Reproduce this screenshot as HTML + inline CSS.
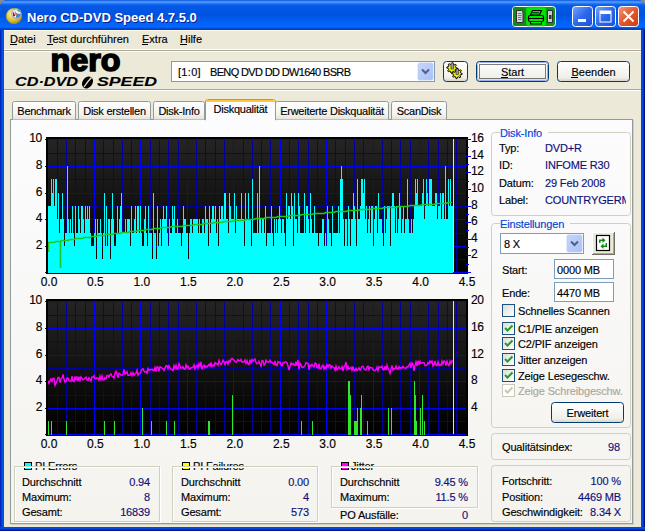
<!DOCTYPE html>
<html><head><meta charset="utf-8"><style>
html,body{margin:0;padding:0;width:645px;height:531px;overflow:hidden;background:#8a8a8a}
svg{display:block}
text{font-family:"Liberation Sans",sans-serif}
</style></head><body>
<svg width="645" height="531" viewBox="0 0 645 531" font-family="Liberation Sans, sans-serif">
<defs>
<linearGradient id="tb" x1="0" y1="0" x2="0" y2="30" gradientUnits="userSpaceOnUse">
<stop offset="0" stop-color="#0a4ee0"/>
<stop offset="0.04" stop-color="#3b8ef5"/>
<stop offset="0.08" stop-color="#4799ff"/>
<stop offset="0.13" stop-color="#1a6cf0"/>
<stop offset="0.2" stop-color="#0459e6"/>
<stop offset="0.5" stop-color="#0053e0"/>
<stop offset="0.75" stop-color="#0062f6"/>
<stop offset="0.9" stop-color="#0568ff"/>
<stop offset="0.95" stop-color="#0049d6"/>
<stop offset="1" stop-color="#003bc4"/>
</linearGradient>
<linearGradient id="plot" x1="0" y1="0" x2="0" y2="1">
<stop offset="0" stop-color="#242424"/>
<stop offset="1" stop-color="#000000"/>
</linearGradient>
<linearGradient id="pane" x1="0" y1="0" x2="0" y2="1">
<stop offset="0" stop-color="#fcfcfe"/>
<stop offset="1" stop-color="#f4f3ee"/>
</linearGradient>
<linearGradient id="tab" x1="0" y1="0" x2="0" y2="1">
<stop offset="0" stop-color="#fefefe"/>
<stop offset="0.7" stop-color="#f4f3ef"/>
<stop offset="1" stop-color="#e6e2d8"/>
</linearGradient>
<linearGradient id="btn" x1="0" y1="0" x2="0" y2="1">
<stop offset="0" stop-color="#ffffff"/>
<stop offset="0.8" stop-color="#f0f0ea"/>
<stop offset="1" stop-color="#d6d0c5"/>
</linearGradient>
<linearGradient id="ddb" x1="0" y1="0" x2="1" y2="1">
<stop offset="0" stop-color="#c6d6fb"/>
<stop offset="1" stop-color="#a8c0f4"/>
</linearGradient>
<linearGradient id="cb" x1="0" y1="0" x2="1" y2="1">
<stop offset="0" stop-color="#dcdcd7"/>
<stop offset="1" stop-color="#ffffff"/>
</linearGradient>
<linearGradient id="capbtn" x1="0" y1="0" x2="1" y2="1">
<stop offset="0" stop-color="#7aa6fb"/>
<stop offset="0.5" stop-color="#2a68ec"/>
<stop offset="1" stop-color="#1c52d8"/>
</linearGradient>
<linearGradient id="closebtn" x1="0" y1="0" x2="1" y2="1">
<stop offset="0" stop-color="#f39a7c"/>
<stop offset="0.5" stop-color="#e2562f"/>
<stop offset="1" stop-color="#c83c18"/>
</linearGradient>
<radialGradient id="disc" cx="0.4" cy="0.35" r="0.7">
<stop offset="0" stop-color="#fff6b0"/>
<stop offset="0.6" stop-color="#e2c23a"/>
<stop offset="1" stop-color="#a88a10"/>
</radialGradient>
</defs>
<rect x="0" y="0" width="645" height="531" fill="#8a8a8a" />
<path d="M0,8 Q0,0 8,0 L637,0 Q645,0 645,8 L645,531 L0,531 Z" fill="#0042d8"/>
<path d="M0,8 Q0,0 8,0 L637,0 Q645,0 645,8 L645,30 L0,30 Z" fill="url(#tb)"/>
<rect x="0" y="30" width="1" height="501" fill="#0026b8" />
<rect x="1" y="30" width="1" height="501" fill="#0040dc" />
<rect x="2" y="30" width="2" height="501" fill="#0050e8" />
<rect x="644" y="30" width="1" height="501" fill="#00138c" />
<rect x="643" y="30" width="1" height="501" fill="#0030c8" />
<rect x="641" y="30" width="2" height="501" fill="#0048e0" />
<rect x="0" y="530" width="645" height="1" fill="#00138c" />
<rect x="0" y="529" width="645" height="1" fill="#0030c8" />
<rect x="0" y="527" width="645" height="2" fill="#0048e0" />
<rect x="4" y="30" width="637" height="497" fill="#ece9d8" />
<rect x="4" y="30" width="637" height="1" fill="#fff9e8" />
<circle cx="14" cy="16" r="7.8" fill="url(#disc)" stroke="#b09a20" stroke-width="0.5"/>
<circle cx="16.3" cy="13.5" r="4.6" fill="#e8f2fa" stroke="#a8a8b4" stroke-width="1.1"/>
<path d="M16.3,13.5 L20.5,14 A4.2,4.2 0 0 1 16,17.8 Z" fill="#2a8ae8"/>
<path d="M14.5,10.5 L17.5,14.5 L15.5,15 Z" fill="#f06030"/><path d="M13,12.5 L14.5,15.5 L13.2,16" stroke="#c01010" stroke-width="1.3"/>
<path d="M17.5,10 L20,11.5" stroke="#30a040" stroke-width="1.4"/>
<text x="28" y="23" font-size="13" fill="#0a1e8c" text-anchor="start" font-weight="bold" >Nero CD-DVD Speed 4.7.5.0</text>
<text x="27" y="22" font-size="13" fill="#ffffff" text-anchor="start" font-weight="bold" >Nero CD-DVD Speed 4.7.5.0</text>
<rect x="512.5" y="6.5" width="43" height="20" rx="3" fill="#0a9a14" stroke="#ffffff" stroke-width="1"/>
<rect x="513" y="7" width="12" height="19" rx="2" fill="#0c8c18"/>
<path d="M516.5,10.5 h5 l1.5,1.5 v10.5 h-6.5 z" fill="#d8d8d8" stroke="#303030" stroke-width="1"/>
<path d="M518,13.5 h3.5 M518,15.5 h3.5 M518,17.5 h3.5 M518,19.5 h3.5" stroke="#606060" stroke-width="0.8"/>
<path d="M547.5,10.5 h5 v12 h-5 z" fill="#c8c8c8" stroke="#303030" stroke-width="1"/>
<rect x="549" y="15" width="2.5" height="4" fill="#303030"/>
<rect x="526" y="7" width="20" height="19" rx="2" fill="#00e600" stroke="#0a9a14" stroke-width="0.5"/>
<path d="M532.5,10.5 H541.5 L539.5,15 H530.5 Z" fill="#00e600" stroke="#000" stroke-width="1.2"/>
<path d="M532.5,12.8 H539" stroke="#000" stroke-width="0.9"/>
<rect x="528.5" y="15.5" width="15" height="6" rx="1.5" fill="#00e600" stroke="#000" stroke-width="1.2"/>
<path d="M529,18.5 H543" stroke="#000" stroke-width="1"/>
<rect x="530.5" y="21.5" width="11" height="2.5" fill="#00e600" stroke="#000" stroke-width="1"/>
<rect x="572.5" y="6.5" width="20" height="20" rx="3" fill="url(#capbtn)" stroke="#ffffff" stroke-width="1"/>
<rect x="595.5" y="6.5" width="20" height="20" rx="3" fill="url(#capbtn)" stroke="#ffffff" stroke-width="1"/>
<rect x="618.5" y="6.5" width="20" height="20" rx="3" fill="url(#closebtn)" stroke="#ffffff" stroke-width="1"/>
<rect x="578" y="19" width="8" height="3" fill="#fff"/>
<rect x="600" y="11" width="11" height="11" fill="none" stroke="#fff" stroke-width="1"/><rect x="600" y="11" width="11" height="3" fill="#fff"/>
<path d="M623.5,11.5 L633.5,21.5 M633.5,11.5 L623.5,21.5" stroke="#fff" stroke-width="2"/>
<text x="10" y="43" font-size="11" fill="#000" text-anchor="start" font-weight="normal" stroke="#000" stroke-width="0.15" >Datei</text>
<text x="47" y="43" font-size="11" fill="#000" text-anchor="start" font-weight="normal" stroke="#000" stroke-width="0.15" >Test durchführen</text>
<text x="142" y="43" font-size="11" fill="#000" text-anchor="start" font-weight="normal" stroke="#000" stroke-width="0.15" >Extra</text>
<text x="180" y="43" font-size="11" fill="#000" text-anchor="start" font-weight="normal" stroke="#000" stroke-width="0.15" >Hilfe</text>
<rect x="10" y="44" width="7" height="1" fill="#000" />
<rect x="47" y="44" width="6" height="1" fill="#000" />
<rect x="142" y="44" width="6" height="1" fill="#000" />
<rect x="180" y="44" width="7" height="1" fill="#000" />
<rect x="4" y="49" width="637" height="1" fill="#ffffff" />
<rect x="4" y="50" width="637" height="1" fill="#aca899" />
<rect x="4" y="51" width="637" height="1" fill="#ffffff" />
<text x="50.5" y="71" font-size="31" font-weight="bold" fill="#000" stroke="#000" stroke-width="1.6" textLength="70" lengthAdjust="spacingAndGlyphs" font-family="Liberation Sans, sans-serif">nero</text>
<text x="15" y="86" font-size="12" font-weight="bold" font-style="italic" fill="#000" stroke="#000" stroke-width="0.1" textLength="63" lengthAdjust="spacingAndGlyphs" font-family="Liberation Sans, sans-serif">CD·DVD</text>
<ellipse cx="87.5" cy="82.5" rx="5" ry="6.5" transform="rotate(35 87.5 82.5)" fill="#000"/>
<path d="M84,87 Q88,81 91.5,77.5" stroke="#ece9d8" stroke-width="1.3" fill="none"/>
<text x="97" y="86" font-size="12" font-weight="bold" font-style="italic" fill="#000" stroke="#000" stroke-width="0.1" textLength="60" lengthAdjust="spacingAndGlyphs" font-family="Liberation Sans, sans-serif">SPEED</text>
<rect x="4" y="89" width="637" height="1" fill="#aca899" />
<rect x="4" y="90" width="637" height="1" fill="#ffffff" />
<rect x="171.5" y="61.5" width="263" height="20" fill="#fff" stroke="#7f9db9" stroke-width="1"/>
<text x="178" y="76" font-size="11" fill="#000" text-anchor="start" font-weight="normal" stroke="#000" stroke-width="0.15" letter-spacing="0.3" >[1:0]</text>
<text x="210" y="76" font-size="11" fill="#000" text-anchor="start" font-weight="normal" stroke="#000" stroke-width="0.15" letter-spacing="-0.65" >BENQ DVD DD DW1640 BSRB</text>
<rect x="418" y="63" width="15" height="17" rx="1.5" fill="url(#ddb)" stroke="#b9cdf7" stroke-width="0.8"/>
<path d="M422,69.5 L425.5,73 L429,69.5" fill="none" stroke="#4d6185" stroke-width="2"/>
<rect x="443.5" y="61.5" width="24" height="20" rx="3" fill="url(#btn)" stroke="#003c74" stroke-width="1"/>
<path d="M462.20,73.50 L462.10,74.51 L460.33,74.88 L459.99,75.50 L460.68,77.18 L459.89,77.82 L458.38,76.83 L457.70,77.03 L457.00,78.70 L455.99,78.60 L455.62,76.83 L455.00,76.49 L453.32,77.18 L452.68,76.39 L453.67,74.88 L453.47,74.20 L451.80,73.50 L451.90,72.49 L453.67,72.12 L454.01,71.50 L453.32,69.82 L454.11,69.18 L455.62,70.17 L456.30,69.97 L457.00,68.30 L458.01,68.40 L458.38,70.17 L459.00,70.51 L460.68,69.82 L461.32,70.61 L460.33,72.12 L460.53,72.80Z" fill="#f5f000" stroke="#000" stroke-width="1"/>
<path d="M457.20,68.00 L457.10,69.01 L455.33,69.38 L454.99,70.00 L455.68,71.68 L454.89,72.32 L453.38,71.33 L452.70,71.53 L452.00,73.20 L450.99,73.10 L450.62,71.33 L450.00,70.99 L448.32,71.68 L447.68,70.89 L448.67,69.38 L448.47,68.70 L446.80,68.00 L446.90,66.99 L448.67,66.62 L449.01,66.00 L448.32,64.32 L449.11,63.68 L450.62,64.67 L451.30,64.47 L452.00,62.80 L453.01,62.90 L453.38,64.67 L454.00,65.01 L455.68,64.32 L456.32,65.11 L455.33,66.62 L455.53,67.30Z" fill="#f5f000" stroke="#000" stroke-width="1"/>
<rect x="451" y="63" width="2.4" height="6" fill="#9a9aa8" stroke="#222" stroke-width="0.6"/>
<rect x="456" y="69" width="2.4" height="5.5" fill="#9a9aa8" stroke="#222" stroke-width="0.6"/>
<rect x="476.5" y="61.5" width="72" height="20" rx="3" fill="url(#btn)" stroke="#003c74" stroke-width="1"/>
<rect x="477.5" y="62.5" width="70" height="18" rx="2" fill="none" stroke="#98b4f0" stroke-width="1"/>
<rect x="479.5" y="64.5" width="66" height="14" fill="none" stroke="#000" stroke-width="1" stroke-dasharray="1,1"/>
<text x="512.5" y="75.5" font-size="11" fill="#000" text-anchor="middle" font-weight="normal" stroke="#000" stroke-width="0.15" >Start</text>
<rect x="501" y="77" width="7" height="1" fill="#000" />
<rect x="557.5" y="61.5" width="72" height="20" rx="3" fill="url(#btn)" stroke="#003c74" stroke-width="1"/>
<text x="593.5" y="75.5" font-size="11" fill="#000" text-anchor="middle" font-weight="normal" stroke="#000" stroke-width="0.15" >Beenden</text>
<rect x="571" y="77" width="7" height="1" fill="#000" />
<rect x="10.5" y="119.5" width="622" height="404" fill="url(#pane)" stroke="#919b9c" stroke-width="1"/>
<rect x="11" y="524" width="623" height="1" fill="#d0cfc0" />
<rect x="633" y="120" width="1" height="405" fill="#d0cfc0" />
<path d="M12.5,119.5 V103.5 Q12.5,101.5 14.5,101.5 H73.5 Q75.5,101.5 75.5,103.5 V119.5" fill="url(#tab)" stroke="#919b9c" stroke-width="1"/>
<text x="44.0" y="115" font-size="11" fill="#000" text-anchor="middle" font-weight="normal" stroke="#000" stroke-width="0.15" letter-spacing="-0.25" >Benchmark</text>
<path d="M78.5,119.5 V103.5 Q78.5,101.5 80.5,101.5 H148.5 Q150.5,101.5 150.5,103.5 V119.5" fill="url(#tab)" stroke="#919b9c" stroke-width="1"/>
<text x="114.5" y="115" font-size="11" fill="#000" text-anchor="middle" font-weight="normal" stroke="#000" stroke-width="0.15" letter-spacing="-0.25" >Disk erstellen</text>
<path d="M153.5,119.5 V103.5 Q153.5,101.5 155.5,101.5 H202.5 Q204.5,101.5 204.5,103.5 V119.5" fill="url(#tab)" stroke="#919b9c" stroke-width="1"/>
<text x="179.0" y="115" font-size="11" fill="#000" text-anchor="middle" font-weight="normal" stroke="#000" stroke-width="0.15" letter-spacing="-0.25" >Disk-Info</text>
<path d="M275.5,119.5 V103.5 Q275.5,101.5 277.5,101.5 H386.5 Q388.5,101.5 388.5,103.5 V119.5" fill="url(#tab)" stroke="#919b9c" stroke-width="1"/>
<text x="332.0" y="115" font-size="11" fill="#000" text-anchor="middle" font-weight="normal" stroke="#000" stroke-width="0.15" letter-spacing="-0.25" >Erweiterte Diskqualität</text>
<path d="M391.5,119.5 V103.5 Q391.5,101.5 393.5,101.5 H444.5 Q446.5,101.5 446.5,103.5 V119.5" fill="url(#tab)" stroke="#919b9c" stroke-width="1"/>
<text x="419.0" y="115" font-size="11" fill="#000" text-anchor="middle" font-weight="normal" stroke="#000" stroke-width="0.15" letter-spacing="-0.25" >ScanDisk</text>
<path d="M205.5,120 V101.5 Q205.5,99.5 207.5,99.5 H273.5 Q275.5,99.5 275.5,101.5 V120 Z" fill="#fcfcfe" stroke="#919b9c" stroke-width="1"/>
<path d="M206,102 V101 Q206,99 208,99 H273 Q275,99 275,101 V102 Z" fill="#ffc73c"/>
<path d="M208,99.5 H273" stroke="#e68b2c" stroke-width="1"/>
<rect x="206" y="100" width="69" height="2" fill="#ffc73c" />
<rect x="206" y="119" width="69" height="2" fill="#fcfcfe" />
<text x="240.5" y="113" font-size="11" fill="#000" text-anchor="middle" font-weight="normal" stroke="#000" stroke-width="0.15" letter-spacing="-0.25" >Diskqualität</text>
<rect x="46" y="137" width="422" height="137" fill="#000" />
<rect x="48" y="139" width="418" height="133" fill="url(#plot)"/>
<rect x="57" y="139" width="1" height="134" fill="#00009c" />
<rect x="66" y="139" width="1" height="134" fill="#00009c" />
<rect x="75" y="139" width="1" height="134" fill="#00009c" />
<rect x="85" y="139" width="1" height="134" fill="#00009c" />
<rect x="94" y="139" width="1" height="134" fill="#0000ff" />
<rect x="103" y="139" width="1" height="134" fill="#00009c" />
<rect x="113" y="139" width="1" height="134" fill="#00009c" />
<rect x="122" y="139" width="1" height="134" fill="#00009c" />
<rect x="131" y="139" width="1" height="134" fill="#00009c" />
<rect x="140" y="139" width="1" height="134" fill="#0000ff" />
<rect x="150" y="139" width="1" height="134" fill="#00009c" />
<rect x="159" y="139" width="1" height="134" fill="#00009c" />
<rect x="168" y="139" width="1" height="134" fill="#00009c" />
<rect x="178" y="139" width="1" height="134" fill="#00009c" />
<rect x="187" y="139" width="1" height="134" fill="#0000ff" />
<rect x="196" y="139" width="1" height="134" fill="#00009c" />
<rect x="205" y="139" width="1" height="134" fill="#00009c" />
<rect x="215" y="139" width="1" height="134" fill="#00009c" />
<rect x="224" y="139" width="1" height="134" fill="#00009c" />
<rect x="233" y="139" width="1" height="134" fill="#0000ff" />
<rect x="243" y="139" width="1" height="134" fill="#00009c" />
<rect x="252" y="139" width="1" height="134" fill="#00009c" />
<rect x="261" y="139" width="1" height="134" fill="#00009c" />
<rect x="270" y="139" width="1" height="134" fill="#00009c" />
<rect x="280" y="139" width="1" height="134" fill="#0000ff" />
<rect x="289" y="139" width="1" height="134" fill="#00009c" />
<rect x="298" y="139" width="1" height="134" fill="#00009c" />
<rect x="308" y="139" width="1" height="134" fill="#00009c" />
<rect x="317" y="139" width="1" height="134" fill="#00009c" />
<rect x="326" y="139" width="1" height="134" fill="#0000ff" />
<rect x="335" y="139" width="1" height="134" fill="#00009c" />
<rect x="345" y="139" width="1" height="134" fill="#00009c" />
<rect x="354" y="139" width="1" height="134" fill="#00009c" />
<rect x="363" y="139" width="1" height="134" fill="#00009c" />
<rect x="373" y="139" width="1" height="134" fill="#0000ff" />
<rect x="382" y="139" width="1" height="134" fill="#00009c" />
<rect x="391" y="139" width="1" height="134" fill="#00009c" />
<rect x="400" y="139" width="1" height="134" fill="#00009c" />
<rect x="410" y="139" width="1" height="134" fill="#00009c" />
<rect x="419" y="139" width="1" height="134" fill="#0000ff" />
<rect x="428" y="139" width="1" height="134" fill="#00009c" />
<rect x="438" y="139" width="1" height="134" fill="#00009c" />
<rect x="447" y="139" width="1" height="134" fill="#00009c" />
<rect x="456" y="139" width="1" height="134" fill="#00009c" />
<rect x="48" y="139" width="418" height="1" fill="#0000ff" />
<rect x="45" y="139" width="3" height="1" fill="#0000ff" />
<rect x="48" y="153" width="418" height="1" fill="#00009c" />
<rect x="48" y="166" width="418" height="1" fill="#0000ff" />
<rect x="45" y="166" width="3" height="1" fill="#0000ff" />
<rect x="48" y="179" width="418" height="1" fill="#00009c" />
<rect x="48" y="193" width="418" height="1" fill="#0000ff" />
<rect x="45" y="193" width="3" height="1" fill="#0000ff" />
<rect x="48" y="206" width="418" height="1" fill="#00009c" />
<rect x="48" y="219" width="418" height="1" fill="#0000ff" />
<rect x="45" y="219" width="3" height="1" fill="#0000ff" />
<rect x="48" y="233" width="418" height="1" fill="#00009c" />
<rect x="48" y="246" width="418" height="1" fill="#0000ff" />
<rect x="45" y="246" width="3" height="1" fill="#0000ff" />
<rect x="48" y="259" width="418" height="1" fill="#00009c" />
<rect x="48" y="272" width="418" height="1" fill="#0000ff" />
<rect x="45" y="272" width="3" height="1" fill="#0000ff" />
<path fill="#00ffff" d="M48,273V206h1V273zM49,273V206h1V273zM50,273V206h1V273zM51,273V179h1V273zM52,273V193h1V273zM53,273V179h1V273zM54,273V206h1V273zM55,273V179h1V273zM56,273V179h1V273zM57,273V219h1V273zM58,273V193h1V273zM59,273V233h1V273zM60,273V219h1V273zM61,273V219h1V273zM62,273V193h1V273zM63,273V219h1V273zM64,273V246h1V273zM65,273V233h1V273zM66,273V233h1V273zM67,273V166h1V273zM68,273V219h1V273zM69,273V233h1V273zM70,273V219h1V273zM71,273V233h1V273zM72,273V206h1V273zM73,273V233h1V273zM74,273V246h1V273zM75,273V206h1V273zM76,273V233h1V273zM77,273V233h1V273zM78,273V206h1V273zM79,273V219h1V273zM80,273V233h1V273zM81,273V206h1V273zM82,273V206h1V273zM83,273V219h1V273zM84,273V233h1V273zM85,273V206h1V273zM86,273V219h1V273zM87,273V206h1V273zM88,273V219h1V273zM89,273V206h1V273zM90,273V233h1V273zM91,273V246h1V273zM92,273V246h1V273zM93,273V246h1V273zM94,273V233h1V273zM95,273V219h1V273zM96,273V259h1V273zM97,273V219h1V273zM98,273V233h1V273zM99,273V233h1V273zM100,273V219h1V273zM101,273V233h1V273zM102,273V259h1V273zM103,273V233h1V273zM104,273V193h1V273zM105,273V246h1V273zM106,273V206h1V273zM107,273V246h1V273zM108,273V219h1V273zM109,273V219h1V273zM110,273V259h1V273zM111,273V219h1V273zM112,273V193h1V273zM113,273V219h1V273zM114,273V246h1V273zM115,273V246h1V273zM116,273V233h1V273zM117,273V206h1V273zM118,273V233h1V273zM119,273V219h1V273zM120,273V206h1V273zM121,273V193h1V273zM122,273V233h1V273zM123,273V233h1V273zM124,273V233h1V273zM125,273V219h1V273zM126,273V233h1V273zM127,273V219h1V273zM128,273V219h1V273zM129,273V219h1V273zM130,273V246h1V273zM131,273V206h1V273zM132,273V233h1V273zM133,273V233h1V273zM134,273V219h1V273zM135,273V206h1V273zM136,273V233h1V273zM137,273V206h1V273zM138,273V206h1V273zM139,273V233h1V273zM140,273V206h1V273zM141,273V233h1V273zM142,273V246h1V273zM143,273V246h1V273zM144,273V219h1V273zM145,273V206h1V273zM146,273V233h1V273zM147,273V246h1V273zM148,273V206h1V273zM149,273V233h1V273zM150,273V233h1V273zM151,273V233h1V273zM152,273V259h1V273zM153,273V193h1V273zM154,273V233h1V273zM155,273V233h1V273zM156,273V259h1V273zM157,273V206h1V273zM158,273V246h1V273zM159,273V233h1V273zM160,273V219h1V273zM161,273V246h1V273zM162,273V219h1V273zM163,273V206h1V273zM164,273V219h1V273zM165,273V219h1V273zM166,273V206h1V273zM167,273V233h1V273zM168,273V246h1V273zM169,273V219h1V273zM170,273V233h1V273zM171,273V233h1V273zM172,273V206h1V273zM173,273V219h1V273zM174,273V206h1V273zM175,273V233h1V273zM176,273V233h1V273zM177,273V219h1V273zM178,273V233h1V273zM179,273V233h1V273zM180,273V233h1V273zM181,273V246h1V273zM182,273V233h1V273zM183,273V206h1V273zM184,273V219h1V273zM185,273V219h1V273zM186,273V233h1V273zM187,273V233h1V273zM188,273V259h1V273zM189,273V233h1V273zM190,273V219h1V273zM191,273V219h1V273zM192,273V233h1V273zM193,273V219h1V273zM194,273V219h1V273zM195,273V219h1V273zM196,273V219h1V273zM197,273V219h1V273zM198,273V233h1V273zM199,273V219h1V273zM200,273V233h1V273zM201,273V233h1V273zM202,273V219h1V273zM203,273V219h1V273zM204,273V233h1V273zM205,273V206h1V273zM206,273V219h1V273zM207,273V219h1V273zM208,273V246h1V273zM209,273V206h1V273zM210,273V233h1V273zM211,273V219h1V273zM212,273V206h1V273zM213,273V206h1V273zM214,273V219h1V273zM215,273V206h1V273zM216,273V233h1V273zM217,273V219h1V273zM218,273V246h1V273zM219,273V206h1V273zM220,273V219h1V273zM221,273V206h1V273zM222,273V206h1V273zM223,273V219h1V273zM224,273V193h1V273zM225,273V193h1V273zM226,273V219h1V273zM227,273V219h1V273zM228,273V233h1V273zM229,273V193h1V273zM230,273V206h1V273zM231,273V219h1V273zM232,273V219h1V273zM233,273V219h1V273zM234,273V193h1V273zM235,273V233h1V273zM236,273V206h1V273zM237,273V219h1V273zM238,273V219h1V273zM239,273V219h1V273zM240,273V219h1V273zM241,273V193h1V273zM242,273V219h1V273zM243,273V219h1V273zM244,273V246h1V273zM245,273V193h1V273zM246,273V219h1V273zM247,273V219h1V273zM248,273V193h1V273zM249,273V219h1V273zM250,273V219h1V273zM251,273V246h1V273zM252,273V179h1V273zM253,273V233h1V273zM254,273V233h1V273zM255,273V233h1V273zM256,273V233h1V273zM257,273V193h1V273zM258,273V233h1V273zM259,273V166h1V273zM260,273V219h1V273zM261,273V233h1V273zM262,273V219h1V273zM263,273V219h1V273zM264,273V233h1V273zM265,273V206h1V273zM266,273V246h1V273zM267,273V233h1V273zM268,273V233h1V273zM269,273V233h1V273zM270,273V233h1V273zM271,273V206h1V273zM272,273V233h1V273zM273,273V246h1V273zM274,273V219h1V273zM275,273V233h1V273zM276,273V219h1V273zM277,273V233h1V273zM278,273V219h1V273zM279,273V206h1V273zM280,273V219h1V273zM281,273V233h1V273zM282,273V219h1V273zM283,273V219h1V273zM284,273V233h1V273zM285,273V246h1V273zM286,273V193h1V273zM287,273V219h1V273zM288,273V206h1V273zM289,273V206h1V273zM290,273V219h1V273zM291,273V193h1V273zM292,273V206h1V273zM293,273V246h1V273zM294,273V193h1V273zM295,273V219h1V273zM296,273V219h1V273zM297,273V233h1V273zM298,273V193h1V273zM299,273V206h1V273zM300,273V233h1V273zM301,273V233h1V273zM302,273V233h1V273zM303,273V233h1V273zM304,273V193h1V273zM305,273V233h1V273zM306,273V206h1V273zM307,273V206h1V273zM308,273V219h1V273zM309,273V233h1V273zM310,273V193h1V273zM311,273V219h1V273zM312,273V233h1V273zM313,273V233h1V273zM314,273V206h1V273zM315,273V233h1V273zM316,273V233h1V273zM317,273V233h1V273zM318,273V246h1V273zM319,273V233h1V273zM320,273V233h1V273zM321,273V233h1V273zM322,273V219h1V273zM323,273V219h1V273zM324,273V246h1V273zM325,273V233h1V273zM326,273V246h1V273zM327,273V206h1V273zM328,273V219h1V273zM329,273V233h1V273zM330,273V233h1V273zM331,273V246h1V273zM332,273V206h1V273zM333,273V233h1V273zM334,273V233h1V273zM335,273V233h1V273zM336,273V233h1V273zM337,273V233h1V273zM338,273V206h1V273zM339,273V233h1V273zM340,273V179h1V273zM341,273V166h1V273zM342,273V179h1V273zM343,273V219h1V273zM344,273V246h1V273zM345,273V219h1V273zM346,273V219h1V273zM347,273V246h1V273zM348,273V206h1V273zM349,273V219h1V273zM350,273V246h1V273zM351,273V219h1V273zM352,273V219h1V273zM353,273V193h1V273zM354,273V206h1V273zM355,273V219h1V273zM356,273V246h1V273zM357,273V179h1V273zM358,273V219h1V273zM359,273V219h1V273zM360,273V206h1V273zM361,273V179h1V273zM362,273V179h1V273zM363,273V193h1V273zM364,273V179h1V273zM365,273V219h1V273zM366,273V206h1V273zM367,273V233h1V273zM368,273V219h1V273zM369,273V206h1V273zM370,273V233h1V273zM371,273V206h1V273zM372,273V206h1V273zM373,273V246h1V273zM374,273V219h1V273zM375,273V206h1V273zM376,273V206h1V273zM377,273V233h1V273zM378,273V193h1V273zM379,273V219h1V273zM380,273V219h1V273zM381,273V219h1V273zM382,273V233h1V273zM383,273V246h1V273zM384,273V206h1V273zM385,273V233h1V273zM386,273V219h1V273zM387,273V206h1V273zM388,273V206h1V273zM389,273V206h1V273zM390,273V246h1V273zM391,273V206h1V273zM392,273V193h1V273zM393,273V193h1V273zM394,273V206h1V273zM395,273V233h1V273zM396,273V206h1V273zM397,273V233h1V273zM398,273V219h1V273zM399,273V193h1V273zM400,273V206h1V273zM401,273V233h1V273zM402,273V219h1V273zM403,273V206h1V273zM404,273V233h1V273zM405,273V219h1V273zM406,273V219h1V273zM407,273V179h1V273zM408,273V219h1V273zM409,273V233h1V273zM410,273V233h1V273zM411,273V219h1V273zM412,273V233h1V273zM413,273V219h1V273zM414,273V206h1V273zM415,273V179h1V273zM416,273V193h1V273zM417,273V179h1V273zM418,273V206h1V273zM419,273V206h1V273zM420,273V206h1V273zM421,273V206h1V273zM422,273V193h1V273zM423,273V179h1V273zM424,273V219h1V273zM425,273V206h1V273zM426,273V179h1V273zM427,273V193h1V273zM428,273V206h1V273zM429,273V179h1V273zM430,273V179h1V273zM431,273V179h1V273zM432,273V206h1V273zM433,273V206h1V273zM434,273V206h1V273zM435,273V193h1V273zM436,273V193h1V273zM437,273V219h1V273zM438,273V206h1V273zM439,273V206h1V273zM440,273V193h1V273zM441,273V219h1V273zM442,273V193h1V273zM443,273V193h1V273zM444,273V219h1V273zM445,273V166h1V273zM446,273V219h1V273zM447,273V219h1V273zM448,273V179h1V273zM449,273V206h1V273zM450,273V179h1V273zM451,273V206h1V273zM452,273V206h1V273z"/>
<polyline fill="none" stroke="#1ec81e" stroke-width="1.6" points="48,242.5 50,242.5 52,242.5 54,242.5 56,241.5 58,241.5 60,241.5 62,240.5 64,240.5 66,240.5 68,240.5 70,239.5 72,239.5 74,239.5 76,238.5 78,238.5 80,238.5 82,238.5 84,237.5 86,237.5 88,237.5 90,237.5 92,236.5 94,236.5 96,236.5 98,235.5 100,235.5 102,235.5 104,235.5 106,234.5 108,234.5 110,234.5 112,234.5 114,233.5 116,233.5 118,233.5 120,233.5 122,232.5 124,232.5 126,232.5 128,232.5 130,231.5 132,231.5 134,231.5 136,231.5 138,230.5 140,230.5 142,230.5 144,230.5 146,229.5 148,229.5 150,229.5 152,229.5 154,228.5 156,228.5 158,228.5 160,228.5 162,227.5 164,227.5 166,227.5 168,227.5 170,227.5 172,226.5 174,226.5 176,226.5 178,226.5 180,226.5 182,226.5 184,225.5 186,225.5 188,225.5 190,225.5 192,225.5 194,224.5 196,224.5 198,224.5 200,224.5 202,224.5 204,223.5 206,223.5 208,223.5 210,223.5 212,223.5 214,222.5 216,222.5 218,222.5 220,222.5 222,222.5 224,221.5 226,221.5 228,221.5 230,221.5 232,221.5 234,220.5 236,220.5 238,220.5 240,220.5 242,220.5 244,220.5 246,219.5 248,219.5 250,219.5 252,219.5 254,219.5 256,218.5 258,218.5 260,218.5 262,218.5 264,218.5 266,217.5 268,217.5 270,217.5 272,217.5 274,217.5 276,217.5 278,216.5 280,216.5 282,216.5 284,216.5 286,216.5 288,216.5 290,215.5 292,215.5 294,215.5 296,215.5 298,215.5 300,215.5 302,214.5 304,214.5 306,214.5 308,214.5 310,214.5 312,214.5 314,213.5 316,213.5 318,213.5 320,213.5 322,213.5 324,213.5 326,212.5 328,212.5 330,212.5 332,212.5 334,212.5 336,211.5 338,211.5 340,211.5 342,211.5 344,211.5 346,211.5 348,210.5 350,210.5 352,210.5 354,210.5 356,210.5 358,210.5 360,209.5 362,209.5 364,209.5 366,209.5 368,209.5 370,209.5 372,208.5 374,208.5 376,208.5 378,208.5 380,208.5 382,208.5 384,207.5 386,207.5 388,207.5 390,207.5 392,207.5 394,207.5 396,207.5 398,206.5 400,206.5 402,206.5 404,206.5 406,206.5 408,206.5 410,205.5 412,205.5 414,205.5 416,205.5 418,205.5 420,205.5 422,204.5 424,204.5 426,204.5 428,204.5 430,204.5 432,204.5 434,204.5 436,203.5 438,203.5 440,203.5 442,203.5 444,203.5 446,203.5 448,202.5 450,202.5 452,202.5"/><path d="M48.5,243 V252 M60.5,241 V268" stroke="#1ec81e" stroke-width="1.6"/>
<rect x="453" y="139" width="1" height="133" fill="#e0e0e0" />
<rect x="46" y="137" width="422" height="2" fill="#000" />
<rect x="46" y="139" width="2" height="135" fill="#000" />
<rect x="466" y="138" width="2" height="136" fill="#000" />
<rect x="46" y="273" width="422" height="1" fill="#000" />
<rect x="466" y="139" width="5" height="1" fill="#0000ff" />
<rect x="466" y="147" width="3" height="1" fill="#0000ff" />
<rect x="466" y="156" width="5" height="1" fill="#0000ff" />
<rect x="466" y="164" width="3" height="1" fill="#0000ff" />
<rect x="466" y="172" width="5" height="1" fill="#0000ff" />
<rect x="466" y="181" width="3" height="1" fill="#0000ff" />
<rect x="466" y="189" width="5" height="1" fill="#0000ff" />
<rect x="466" y="197" width="3" height="1" fill="#0000ff" />
<rect x="466" y="206" width="5" height="1" fill="#0000ff" />
<rect x="466" y="214" width="3" height="1" fill="#0000ff" />
<rect x="466" y="222" width="5" height="1" fill="#0000ff" />
<rect x="466" y="230" width="3" height="1" fill="#0000ff" />
<rect x="466" y="239" width="5" height="1" fill="#0000ff" />
<rect x="466" y="247" width="3" height="1" fill="#0000ff" />
<rect x="466" y="255" width="5" height="1" fill="#0000ff" />
<rect x="466" y="264" width="3" height="1" fill="#0000ff" />
<rect x="466" y="272" width="5" height="1" fill="#0000ff" />
<text x="42" y="141.5" font-size="12" fill="#000" text-anchor="end" font-weight="normal" stroke="#000" stroke-width="0.15" letter-spacing="-0.3" >10</text>
<text x="42" y="168.5" font-size="12" fill="#000" text-anchor="end" font-weight="normal" stroke="#000" stroke-width="0.15" letter-spacing="-0.3" >8</text>
<text x="42" y="195.5" font-size="12" fill="#000" text-anchor="end" font-weight="normal" stroke="#000" stroke-width="0.15" letter-spacing="-0.3" >6</text>
<text x="42" y="221.5" font-size="12" fill="#000" text-anchor="end" font-weight="normal" stroke="#000" stroke-width="0.15" letter-spacing="-0.3" >4</text>
<text x="42" y="248.5" font-size="12" fill="#000" text-anchor="end" font-weight="normal" stroke="#000" stroke-width="0.15" letter-spacing="-0.3" >2</text>
<text x="471" y="142" font-size="12" fill="#000" text-anchor="start" font-weight="normal" stroke="#000" stroke-width="0.15" letter-spacing="-0.3" >16</text>
<text x="471" y="159" font-size="12" fill="#000" text-anchor="start" font-weight="normal" stroke="#000" stroke-width="0.15" letter-spacing="-0.3" >14</text>
<text x="471" y="175" font-size="12" fill="#000" text-anchor="start" font-weight="normal" stroke="#000" stroke-width="0.15" letter-spacing="-0.3" >12</text>
<text x="471" y="192" font-size="12" fill="#000" text-anchor="start" font-weight="normal" stroke="#000" stroke-width="0.15" letter-spacing="-0.3" >10</text>
<text x="471" y="209" font-size="12" fill="#000" text-anchor="start" font-weight="normal" stroke="#000" stroke-width="0.15" letter-spacing="-0.3" >8</text>
<text x="471" y="225" font-size="12" fill="#000" text-anchor="start" font-weight="normal" stroke="#000" stroke-width="0.15" letter-spacing="-0.3" >6</text>
<text x="471" y="242" font-size="12" fill="#000" text-anchor="start" font-weight="normal" stroke="#000" stroke-width="0.15" letter-spacing="-0.3" >4</text>
<text x="471" y="258" font-size="12" fill="#000" text-anchor="start" font-weight="normal" stroke="#000" stroke-width="0.15" letter-spacing="-0.3" >2</text>
<text x="49.0" y="286" font-size="12" fill="#000" text-anchor="middle" font-weight="normal" stroke="#000" stroke-width="0.15" >0.0</text>
<text x="95.44444444444446" y="286" font-size="12" fill="#000" text-anchor="middle" font-weight="normal" stroke="#000" stroke-width="0.15" >0.5</text>
<text x="141.8888888888889" y="286" font-size="12" fill="#000" text-anchor="middle" font-weight="normal" stroke="#000" stroke-width="0.15" >1.0</text>
<text x="188.33333333333334" y="286" font-size="12" fill="#000" text-anchor="middle" font-weight="normal" stroke="#000" stroke-width="0.15" >1.5</text>
<text x="234.7777777777778" y="286" font-size="12" fill="#000" text-anchor="middle" font-weight="normal" stroke="#000" stroke-width="0.15" >2.0</text>
<text x="281.22222222222223" y="286" font-size="12" fill="#000" text-anchor="middle" font-weight="normal" stroke="#000" stroke-width="0.15" >2.5</text>
<text x="327.6666666666667" y="286" font-size="12" fill="#000" text-anchor="middle" font-weight="normal" stroke="#000" stroke-width="0.15" >3.0</text>
<text x="374.11111111111114" y="286" font-size="12" fill="#000" text-anchor="middle" font-weight="normal" stroke="#000" stroke-width="0.15" >3.5</text>
<text x="420.5555555555556" y="286" font-size="12" fill="#000" text-anchor="middle" font-weight="normal" stroke="#000" stroke-width="0.15" >4.0</text>
<text x="467.00000000000006" y="286" font-size="12" fill="#000" text-anchor="middle" font-weight="normal" stroke="#000" stroke-width="0.15" >4.5</text>
<rect x="46" y="299" width="422" height="137" fill="#000" />
<rect x="48" y="301" width="418" height="133" fill="url(#plot)"/>
<rect x="57" y="301" width="1" height="134" fill="#00009c" />
<rect x="66" y="301" width="1" height="134" fill="#00009c" />
<rect x="75" y="301" width="1" height="134" fill="#00009c" />
<rect x="85" y="301" width="1" height="134" fill="#00009c" />
<rect x="94" y="301" width="1" height="134" fill="#0000ff" />
<rect x="103" y="301" width="1" height="134" fill="#00009c" />
<rect x="113" y="301" width="1" height="134" fill="#00009c" />
<rect x="122" y="301" width="1" height="134" fill="#00009c" />
<rect x="131" y="301" width="1" height="134" fill="#00009c" />
<rect x="140" y="301" width="1" height="134" fill="#0000ff" />
<rect x="150" y="301" width="1" height="134" fill="#00009c" />
<rect x="159" y="301" width="1" height="134" fill="#00009c" />
<rect x="168" y="301" width="1" height="134" fill="#00009c" />
<rect x="178" y="301" width="1" height="134" fill="#00009c" />
<rect x="187" y="301" width="1" height="134" fill="#0000ff" />
<rect x="196" y="301" width="1" height="134" fill="#00009c" />
<rect x="205" y="301" width="1" height="134" fill="#00009c" />
<rect x="215" y="301" width="1" height="134" fill="#00009c" />
<rect x="224" y="301" width="1" height="134" fill="#00009c" />
<rect x="233" y="301" width="1" height="134" fill="#0000ff" />
<rect x="243" y="301" width="1" height="134" fill="#00009c" />
<rect x="252" y="301" width="1" height="134" fill="#00009c" />
<rect x="261" y="301" width="1" height="134" fill="#00009c" />
<rect x="270" y="301" width="1" height="134" fill="#00009c" />
<rect x="280" y="301" width="1" height="134" fill="#0000ff" />
<rect x="289" y="301" width="1" height="134" fill="#00009c" />
<rect x="298" y="301" width="1" height="134" fill="#00009c" />
<rect x="308" y="301" width="1" height="134" fill="#00009c" />
<rect x="317" y="301" width="1" height="134" fill="#00009c" />
<rect x="326" y="301" width="1" height="134" fill="#0000ff" />
<rect x="335" y="301" width="1" height="134" fill="#00009c" />
<rect x="345" y="301" width="1" height="134" fill="#00009c" />
<rect x="354" y="301" width="1" height="134" fill="#00009c" />
<rect x="363" y="301" width="1" height="134" fill="#00009c" />
<rect x="373" y="301" width="1" height="134" fill="#0000ff" />
<rect x="382" y="301" width="1" height="134" fill="#00009c" />
<rect x="391" y="301" width="1" height="134" fill="#00009c" />
<rect x="400" y="301" width="1" height="134" fill="#00009c" />
<rect x="410" y="301" width="1" height="134" fill="#00009c" />
<rect x="419" y="301" width="1" height="134" fill="#0000ff" />
<rect x="428" y="301" width="1" height="134" fill="#00009c" />
<rect x="438" y="301" width="1" height="134" fill="#00009c" />
<rect x="447" y="301" width="1" height="134" fill="#00009c" />
<rect x="456" y="301" width="1" height="134" fill="#00009c" />
<rect x="48" y="301" width="418" height="1" fill="#0000ff" />
<rect x="45" y="301" width="3" height="1" fill="#0000ff" />
<rect x="48" y="315" width="418" height="1" fill="#00009c" />
<rect x="48" y="328" width="418" height="1" fill="#0000ff" />
<rect x="45" y="328" width="3" height="1" fill="#0000ff" />
<rect x="48" y="341" width="418" height="1" fill="#00009c" />
<rect x="48" y="355" width="418" height="1" fill="#0000ff" />
<rect x="45" y="355" width="3" height="1" fill="#0000ff" />
<rect x="48" y="368" width="418" height="1" fill="#00009c" />
<rect x="48" y="381" width="418" height="1" fill="#0000ff" />
<rect x="45" y="381" width="3" height="1" fill="#0000ff" />
<rect x="48" y="395" width="418" height="1" fill="#00009c" />
<rect x="48" y="408" width="418" height="1" fill="#0000ff" />
<rect x="45" y="408" width="3" height="1" fill="#0000ff" />
<rect x="48" y="421" width="418" height="1" fill="#00009c" />
<rect x="48" y="434" width="418" height="1" fill="#0000ff" />
<rect x="45" y="434" width="3" height="1" fill="#0000ff" />
<path fill="#2ee82e" d="M48,435V421h1V435zM51,435V421h1V435zM66,435V421h1V435zM104,435V421h1V435zM114,435V421h1V435zM142,435V408h1V435zM151,435V421h1V435zM166,435V421h1V435zM174,435V421h1V435zM208,435V421h2V435zM232,435V395h1V435zM301,435V421h1V435zM312,435V421h1V435zM348,435V381h2V435zM350,435V395h1V435zM354,435V421h3V435zM357,435V408h1V435zM360,435V408h1V435zM361,435V395h1V435zM367,435V421h1V435zM388,435V408h1V435zM391,435V408h1V435zM414,435V381h1V435zM415,435V395h1V435zM416,435V421h1V435zM420,435V408h1V435zM422,435V395h1V435zM424,435V421h1V435z"/>
<polyline fill="none" stroke="#ff00ff" stroke-width="1.4" points="48,380.7 49,383.3 50,380.9 51,379.0 52,381.4 53,378.3 54,378.2 55,385.4 56,382.9 57,380.8 58,377.4 59,377.5 60,382.5 61,378.8 62,378.0 63,374.5 64,379.3 65,382.2 66,381.3 67,378.2 68,378.0 69,380.6 70,380.9 71,381.5 72,376.1 73,381.2 74,381.6 75,376.4 76,380.4 77,376.5 78,381.3 79,376.6 80,380.4 81,376.8 82,378.3 83,379.9 84,379.3 85,378.1 86,377.2 87,380.1 88,380.6 89,377.8 90,379.1 91,381.0 92,376.9 93,377.3 94,375.8 95,378.6 96,378.7 97,377.8 98,378.0 99,380.1 100,376.1 101,379.6 102,376.0 103,380.0 104,379.9 105,377.8 106,378.9 107,375.5 108,375.4 109,377.2 110,374.7 111,373.9 112,376.5 113,376.7 114,378.2 115,373.0 116,371.3 117,374.2 118,377.9 119,373.1 120,374.1 121,375.0 122,375.2 123,374.5 124,369.4 125,374.2 126,373.2 127,371.7 128,375.3 129,375.1 130,375.3 131,372.7 132,375.6 133,372.8 134,375.2 135,373.7 136,373.3 137,370.3 138,375.2 139,373.5 140,373.4 141,371.5 142,369.3 143,368.8 144,371.2 145,372.2 146,371.5 147,373.3 148,368.5 149,370.4 150,369.3 151,369.9 152,369.2 153,370.3 154,370.8 155,367.6 156,371.4 157,366.9 158,367.1 159,371.3 160,366.9 161,367.4 162,368.1 163,368.5 164,370.4 165,368.1 166,365.7 167,365.7 168,368.6 169,365.7 170,367.5 171,369.5 172,369.5 173,370.6 174,365.6 175,368.5 176,365.3 177,369.4 178,368.7 179,363.6 180,366.1 181,368.4 182,367.9 183,366.6 184,369.4 185,369.4 186,364.9 187,367.6 188,366.1 189,368.9 190,369.2 191,367.5 192,367.8 193,367.3 194,364.8 195,369.0 196,366.5 197,365.2 198,368.1 199,363.7 200,366.3 201,361.8 202,369.3 203,366.6 204,365.2 205,367.5 206,366.1 207,367.1 208,365.8 209,364.3 210,366.3 211,362.5 212,366.5 213,365.0 214,366.0 215,362.6 216,363.8 217,363.4 218,365.1 219,360.5 220,363.1 221,364.5 222,362.6 223,360.1 224,361.9 225,364.6 226,361.9 227,361.5 228,364.0 229,360.6 230,362.1 231,359.2 232,358.5 233,359.5 234,360.0 235,361.8 236,362.4 237,361.2 238,359.5 239,360.9 240,360.8 241,359.4 242,362.1 243,361.6 244,362.1 245,360.0 246,363.3 247,360.6 248,364.0 249,364.5 250,359.7 251,363.1 252,359.6 253,361.4 254,359.8 255,359.0 256,362.4 257,363.9 258,363.3 259,361.3 260,364.1 261,366.2 262,360.4 263,360.7 264,365.2 265,364.2 266,360.2 267,362.0 268,361.9 269,362.0 270,360.2 271,362.3 272,362.2 273,363.6 274,364.7 275,360.8 276,365.2 277,365.7 278,361.5 279,362.4 280,362.1 281,364.8 282,365.9 283,362.6 284,362.9 285,361.9 286,361.9 287,362.7 288,366.0 289,370.1 290,366.4 291,363.1 292,364.4 293,363.5 294,365.0 295,365.7 296,361.6 297,365.7 298,359.8 299,369.3 300,363.1 301,364.9 302,367.3 303,367.5 304,366.6 305,365.5 306,362.5 307,363.2 308,363.4 309,369.9 310,365.0 311,366.0 312,364.4 313,366.0 314,367.0 315,363.1 316,363.4 317,367.5 318,368.3 319,363.7 320,368.8 321,368.7 322,366.4 323,365.1 324,369.1 325,366.6 326,368.6 327,364.8 328,366.8 329,364.6 330,365.1 331,368.2 332,366.0 333,367.0 334,367.7 335,370.2 336,366.3 337,370.0 338,368.6 339,366.7 340,368.5 341,368.9 342,366.5 343,371.1 344,366.6 345,365.8 346,362.0 347,369.0 348,366.5 349,369.2 350,368.3 351,367.3 352,370.3 353,366.5 354,370.6 355,370.4 356,368.4 357,370.5 358,369.6 359,367.8 360,370.1 361,368.3 362,366.4 363,366.2 364,368.9 365,369.6 366,370.1 367,366.9 368,366.1 369,369.7 370,367.2 371,367.6 372,367.6 373,369.5 374,370.6 375,370.6 376,369.9 377,367.2 378,370.6 379,366.7 380,367.3 381,367.5 382,366.3 383,369.7 384,369.9 385,366.1 386,370.1 387,365.2 388,368.1 389,370.4 390,373.5 391,369.4 392,365.4 393,369.9 394,368.4 395,369.0 396,366.2 397,369.1 398,369.0 399,366.6 400,368.5 401,367.5 402,368.2 403,366.3 404,367.5 405,368.1 406,368.3 407,366.7 408,366.9 409,365.0 410,363.3 411,367.8 412,362.9 413,364.2 414,371.0 415,365.4 416,362.0 417,366.0 418,360.7 419,364.9 420,361.3 421,363.5 422,362.9 423,362.7 424,362.5 425,365.5 426,365.6 427,365.1 428,362.6 429,364.0 430,360.9 431,362.6 432,361.1 433,365.9 434,364.7 435,360.8 436,365.4 437,365.5 438,361.9 439,365.4 440,364.8 441,365.6 442,361.3 443,364.0 444,360.9 445,361.6 446,365.7 447,361.3 448,364.1 449,365.6 450,361.1 451,363.7 452,360.8 453,361.8"/>
<rect x="453" y="301" width="1" height="133" fill="#e0e0e0" />
<rect x="46" y="299" width="422" height="2" fill="#000" />
<rect x="46" y="301" width="2" height="135" fill="#000" />
<rect x="466" y="300" width="2" height="136" fill="#000" />
<rect x="46" y="435" width="422" height="1" fill="#000" />
<text x="42" y="303.5" font-size="12" fill="#000" text-anchor="end" font-weight="normal" stroke="#000" stroke-width="0.15" letter-spacing="-0.3" >10</text>
<text x="42" y="330.5" font-size="12" fill="#000" text-anchor="end" font-weight="normal" stroke="#000" stroke-width="0.15" letter-spacing="-0.3" >8</text>
<text x="42" y="357.5" font-size="12" fill="#000" text-anchor="end" font-weight="normal" stroke="#000" stroke-width="0.15" letter-spacing="-0.3" >6</text>
<text x="42" y="383.5" font-size="12" fill="#000" text-anchor="end" font-weight="normal" stroke="#000" stroke-width="0.15" letter-spacing="-0.3" >4</text>
<text x="42" y="410.5" font-size="12" fill="#000" text-anchor="end" font-weight="normal" stroke="#000" stroke-width="0.15" letter-spacing="-0.3" >2</text>
<text x="471" y="304" font-size="12" fill="#000" text-anchor="start" font-weight="normal" stroke="#000" stroke-width="0.15" letter-spacing="-0.3" >20</text>
<text x="471" y="331" font-size="12" fill="#000" text-anchor="start" font-weight="normal" stroke="#000" stroke-width="0.15" letter-spacing="-0.3" >16</text>
<text x="471" y="358" font-size="12" fill="#000" text-anchor="start" font-weight="normal" stroke="#000" stroke-width="0.15" letter-spacing="-0.3" >12</text>
<text x="471" y="384" font-size="12" fill="#000" text-anchor="start" font-weight="normal" stroke="#000" stroke-width="0.15" letter-spacing="-0.3" >8</text>
<text x="471" y="411" font-size="12" fill="#000" text-anchor="start" font-weight="normal" stroke="#000" stroke-width="0.15" letter-spacing="-0.3" >4</text>
<text x="49.0" y="448" font-size="12" fill="#000" text-anchor="middle" font-weight="normal" stroke="#000" stroke-width="0.15" >0.0</text>
<text x="95.44444444444446" y="448" font-size="12" fill="#000" text-anchor="middle" font-weight="normal" stroke="#000" stroke-width="0.15" >0.5</text>
<text x="141.8888888888889" y="448" font-size="12" fill="#000" text-anchor="middle" font-weight="normal" stroke="#000" stroke-width="0.15" >1.0</text>
<text x="188.33333333333334" y="448" font-size="12" fill="#000" text-anchor="middle" font-weight="normal" stroke="#000" stroke-width="0.15" >1.5</text>
<text x="234.7777777777778" y="448" font-size="12" fill="#000" text-anchor="middle" font-weight="normal" stroke="#000" stroke-width="0.15" >2.0</text>
<text x="281.22222222222223" y="448" font-size="12" fill="#000" text-anchor="middle" font-weight="normal" stroke="#000" stroke-width="0.15" >2.5</text>
<text x="327.6666666666667" y="448" font-size="12" fill="#000" text-anchor="middle" font-weight="normal" stroke="#000" stroke-width="0.15" >3.0</text>
<text x="374.11111111111114" y="448" font-size="12" fill="#000" text-anchor="middle" font-weight="normal" stroke="#000" stroke-width="0.15" >3.5</text>
<text x="420.5555555555556" y="448" font-size="12" fill="#000" text-anchor="middle" font-weight="normal" stroke="#000" stroke-width="0.15" >4.0</text>
<text x="467.00000000000006" y="448" font-size="12" fill="#000" text-anchor="middle" font-weight="normal" stroke="#000" stroke-width="0.15" >4.5</text>
<path d="M500,132.5 H494.5 Q491.5,132.5 491.5,135.5 V212.5 Q491.5,215.5 494.5,215.5 H627.5 Q630.5,215.5 630.5,212.5 V135.5 Q630.5,132.5 627.5,132.5 H548" fill="none" stroke="#d0d0bf" stroke-width="1"/>
<text x="500" y="137" font-size="11" fill="#0046d5" text-anchor="start" font-weight="normal" stroke="#0046d5" stroke-width="0.15" letter-spacing="-0.15" >Disk-Info</text>
<text x="499" y="152" font-size="11" fill="#000" text-anchor="start" font-weight="normal" stroke="#000" stroke-width="0.15" letter-spacing="-0.15" >Typ:</text>
<text x="545" y="152" font-size="11" fill="#10107a" text-anchor="start" font-weight="normal" stroke="#10107a" stroke-width="0.15" letter-spacing="-0.15" >DVD+R</text>
<text x="499" y="169" font-size="11" fill="#000" text-anchor="start" font-weight="normal" stroke="#000" stroke-width="0.15" letter-spacing="-0.15" >ID:</text>
<text x="545" y="169" font-size="11" fill="#10107a" text-anchor="start" font-weight="normal" stroke="#10107a" stroke-width="0.15" letter-spacing="-0.15" >INFOME R30</text>
<text x="499" y="187" font-size="11" fill="#000" text-anchor="start" font-weight="normal" stroke="#000" stroke-width="0.15" letter-spacing="-0.15" >Datum:</text>
<text x="545" y="187" font-size="11" fill="#10107a" text-anchor="start" font-weight="normal" stroke="#10107a" stroke-width="0.15" letter-spacing="-0.15" >29 Feb 2008</text>
<text x="499" y="204" font-size="11" fill="#000" text-anchor="start" font-weight="normal" stroke="#000" stroke-width="0.15" letter-spacing="-0.15" >Label:</text>
<clipPath id="lc"><rect x="540" y="190" width="86" height="20"/></clipPath>
<text x="545" y="204" font-size="11" fill="#10107a" text-anchor="start" font-weight="normal" stroke="#10107a" stroke-width="0.15" letter-spacing="-0.15" clip-path="url(#lc)">COUNTRYGERM</text>
<path d="M500,223.5 H494.5 Q491.5,223.5 491.5,226.5 V424.5 Q491.5,427.5 494.5,427.5 H627.5 Q630.5,427.5 630.5,424.5 V226.5 Q630.5,223.5 627.5,223.5 H570" fill="none" stroke="#d0d0bf" stroke-width="1"/>
<text x="500" y="228" font-size="11" fill="#0046d5" text-anchor="start" font-weight="normal" stroke="#0046d5" stroke-width="0.15" letter-spacing="-0.15" >Einstellungen</text>
<rect x="500.5" y="233.5" width="83" height="20" fill="#fff" stroke="#7f9db9" stroke-width="1"/>
<text x="504" y="248" font-size="11" fill="#000" text-anchor="start" font-weight="normal" stroke="#000" stroke-width="0.15" letter-spacing="-0.15" >8 X</text>
<rect x="567" y="235" width="15" height="17" rx="1.5" fill="url(#ddb)" stroke="#b9cdf7" stroke-width="0.8"/>
<path d="M571,241.5 L574.5,245 L578,241.5" fill="none" stroke="#4d6185" stroke-width="2"/>
<rect x="592" y="232" width="23" height="23" fill="#716f64" />
<rect x="592" y="232" width="22" height="22" fill="#ffffff" />
<rect x="593" y="233" width="21" height="21" fill="#aca899" />
<rect x="593" y="233" width="20" height="20" fill="#ece9d8" />
<rect x="596.5" y="235.5" width="13" height="15" fill="#fff" stroke="#000" stroke-width="1.2"/>
<path d="M599.8,243 V240.2 H603" fill="none" stroke="#108a10" stroke-width="1.5"/><path d="M602.5,237.5 L605.5,240.2 L602.5,243 Z" fill="#108a10"/>
<path d="M606.3,243 V246.2 H603" fill="none" stroke="#108a10" stroke-width="1.5"/><path d="M603.5,243.5 L600.5,246.2 L603.5,249 Z" fill="#108a10"/>
<text x="502" y="274" font-size="11" fill="#000" text-anchor="start" font-weight="normal" stroke="#000" stroke-width="0.15" letter-spacing="-0.15" >Start:</text>
<rect x="554.5" y="259.5" width="59" height="19" fill="#fff" stroke="#7f9db9" stroke-width="1"/>
<text x="557" y="274" font-size="11" fill="#000" text-anchor="start" font-weight="normal" stroke="#000" stroke-width="0.15" letter-spacing="-0.15" >0000 MB</text>
<text x="502" y="297" font-size="11" fill="#000" text-anchor="start" font-weight="normal" stroke="#000" stroke-width="0.15" letter-spacing="-0.15" >Ende:</text>
<rect x="554.5" y="282.5" width="59" height="19" fill="#fff" stroke="#7f9db9" stroke-width="1"/>
<text x="557" y="297" font-size="11" fill="#000" text-anchor="start" font-weight="normal" stroke="#000" stroke-width="0.15" letter-spacing="-0.15" >4470 MB</text>
<rect x="502.5" y="304.5" width="12" height="12" fill="url(#cb)" stroke="#1c5180" stroke-width="1"/>
<text x="518" y="315" font-size="11" fill="#000" text-anchor="start" font-weight="normal" stroke="#000" stroke-width="0.15" letter-spacing="-0.15" >Schnelles Scannen</text>
<rect x="502.5" y="322.5" width="12" height="12" fill="url(#cb)" stroke="#1c5180" stroke-width="1"/>
<path d="M505,328 l2.5,2.5 l5,-5" fill="none" stroke="#21a121" stroke-width="2"/>
<text x="518" y="333" font-size="11" fill="#000" text-anchor="start" font-weight="normal" stroke="#000" stroke-width="0.15" letter-spacing="-0.15" >C1/PIE anzeigen</text>
<rect x="502.5" y="337.5" width="12" height="12" fill="url(#cb)" stroke="#1c5180" stroke-width="1"/>
<path d="M505,343 l2.5,2.5 l5,-5" fill="none" stroke="#21a121" stroke-width="2"/>
<text x="518" y="348" font-size="11" fill="#000" text-anchor="start" font-weight="normal" stroke="#000" stroke-width="0.15" letter-spacing="-0.15" >C2/PIF anzeigen</text>
<rect x="502.5" y="353.5" width="12" height="12" fill="url(#cb)" stroke="#1c5180" stroke-width="1"/>
<path d="M505,359 l2.5,2.5 l5,-5" fill="none" stroke="#21a121" stroke-width="2"/>
<text x="518" y="364" font-size="11" fill="#000" text-anchor="start" font-weight="normal" stroke="#000" stroke-width="0.15" letter-spacing="-0.15" >Jitter anzeigen</text>
<rect x="502.5" y="369.5" width="12" height="12" fill="url(#cb)" stroke="#1c5180" stroke-width="1"/>
<path d="M505,375 l2.5,2.5 l5,-5" fill="none" stroke="#21a121" stroke-width="2"/>
<text x="518" y="380" font-size="11" fill="#000" text-anchor="start" font-weight="normal" stroke="#000" stroke-width="0.15" letter-spacing="-0.15" >Zeige Lesegeschw.</text>
<rect x="502.5" y="384.5" width="12" height="12" fill="#fff" stroke="#cac8bb" stroke-width="1"/>
<path d="M505,390 l2.5,2.5 l5,-5" fill="none" stroke="#cac8bb" stroke-width="2"/>
<text x="518" y="395" font-size="11" fill="#aca899" text-anchor="start" font-weight="normal" stroke="#aca899" stroke-width="0.15" letter-spacing="-0.15" >Zeige Schreibgeschw.</text>
<rect x="551.5" y="402.5" width="72" height="20" rx="3" fill="url(#btn)" stroke="#003c74" stroke-width="1"/>
<text x="587.5" y="416.5" font-size="11" fill="#000" text-anchor="middle" font-weight="normal" stroke="#000" stroke-width="0.15" letter-spacing="-0.15" >Erweitert</text>
<path d="M494.5,433.5 Q491.5,433.5 491.5,436.5 V456.5 Q491.5,459.5 494.5,459.5 H627.5 Q630.5,459.5 630.5,456.5 V436.5 Q630.5,433.5 627.5,433.5 Z" fill="none" stroke="#d0d0bf" stroke-width="1"/>
<text x="502" y="451" font-size="11" fill="#000" text-anchor="start" font-weight="normal" stroke="#000" stroke-width="0.15" letter-spacing="-0.15" >Qualitätsindex:</text>
<text x="620" y="451" font-size="11" fill="#10107a" text-anchor="end" font-weight="normal" stroke="#10107a" stroke-width="0.15" letter-spacing="-0.15" >98</text>
<path d="M494.5,465.5 Q491.5,465.5 491.5,468.5 V518.5 Q491.5,521.5 494.5,521.5 H627.5 Q630.5,521.5 630.5,518.5 V468.5 Q630.5,465.5 627.5,465.5 Z" fill="none" stroke="#d0d0bf" stroke-width="1"/>
<text x="502" y="485" font-size="11" fill="#000" text-anchor="start" font-weight="normal" stroke="#000" stroke-width="0.15" letter-spacing="-0.15" >Fortschritt:</text>
<text x="621" y="485" font-size="11" fill="#10107a" text-anchor="end" font-weight="normal" stroke="#10107a" stroke-width="0.15" letter-spacing="-0.15" >100 %</text>
<text x="502" y="501" font-size="11" fill="#000" text-anchor="start" font-weight="normal" stroke="#000" stroke-width="0.15" letter-spacing="-0.15" >Position:</text>
<text x="621" y="501" font-size="11" fill="#10107a" text-anchor="end" font-weight="normal" stroke="#10107a" stroke-width="0.15" letter-spacing="-0.15" >4469 MB</text>
<text x="502" y="516" font-size="11" fill="#000" text-anchor="start" font-weight="normal" stroke="#000" stroke-width="0.15" letter-spacing="-0.15" >Geschwindigkeit:</text>
<text x="621" y="516" font-size="11" fill="#10107a" text-anchor="end" font-weight="normal" stroke="#10107a" stroke-width="0.15" letter-spacing="-0.15" >8.34 X</text>
<rect x="24" y="462" width="8" height="8" fill="#000" />
<rect x="25" y="463" width="6" height="6" fill="#00ffff" />
<text x="35" y="470" font-size="11" fill="#000" text-anchor="start" font-weight="normal" stroke="#000" stroke-width="0.15" letter-spacing="-0.15" >PI Errors</text>
<rect x="14.5" y="466.5" width="145" height="55" fill="none" stroke="#ffffff" stroke-width="1" transform="translate(1,1)"/>
<rect x="14.5" y="466.5" width="145" height="55" fill="none" stroke="#d0d0bf" stroke-width="1"/>
<text x="22" y="486" font-size="11" fill="#000" text-anchor="start" font-weight="normal" stroke="#000" stroke-width="0.15" letter-spacing="-0.15" >Durchschnitt</text>
<text x="150" y="486" font-size="11" fill="#10107a" text-anchor="end" font-weight="normal" stroke="#10107a" stroke-width="0.15" letter-spacing="-0.15" >0.94</text>
<text x="22" y="501" font-size="11" fill="#000" text-anchor="start" font-weight="normal" stroke="#000" stroke-width="0.15" letter-spacing="-0.15" >Maximum:</text>
<text x="150" y="501" font-size="11" fill="#10107a" text-anchor="end" font-weight="normal" stroke="#10107a" stroke-width="0.15" letter-spacing="-0.15" >8</text>
<text x="22" y="515.5" font-size="11" fill="#000" text-anchor="start" font-weight="normal" stroke="#000" stroke-width="0.15" letter-spacing="-0.15" >Gesamt:</text>
<text x="150" y="515.5" font-size="11" fill="#10107a" text-anchor="end" font-weight="normal" stroke="#10107a" stroke-width="0.15" letter-spacing="-0.15" >16839</text>
<rect x="182" y="462" width="8" height="8" fill="#000" />
<rect x="183" y="463" width="6" height="6" fill="#ffff00" />
<text x="193" y="470" font-size="11" fill="#000" text-anchor="start" font-weight="normal" stroke="#000" stroke-width="0.15" letter-spacing="-0.15" >PI Failures</text>
<rect x="172.5" y="466.5" width="145" height="55" fill="none" stroke="#ffffff" stroke-width="1" transform="translate(1,1)"/>
<rect x="172.5" y="466.5" width="145" height="55" fill="none" stroke="#d0d0bf" stroke-width="1"/>
<text x="181" y="486" font-size="11" fill="#000" text-anchor="start" font-weight="normal" stroke="#000" stroke-width="0.15" letter-spacing="-0.15" >Durchschnitt</text>
<text x="309" y="486" font-size="11" fill="#10107a" text-anchor="end" font-weight="normal" stroke="#10107a" stroke-width="0.15" letter-spacing="-0.15" >0.00</text>
<text x="181" y="501" font-size="11" fill="#000" text-anchor="start" font-weight="normal" stroke="#000" stroke-width="0.15" letter-spacing="-0.15" >Maximum:</text>
<text x="309" y="501" font-size="11" fill="#10107a" text-anchor="end" font-weight="normal" stroke="#10107a" stroke-width="0.15" letter-spacing="-0.15" >4</text>
<text x="181" y="515.5" font-size="11" fill="#000" text-anchor="start" font-weight="normal" stroke="#000" stroke-width="0.15" letter-spacing="-0.15" >Gesamt:</text>
<text x="309" y="515.5" font-size="11" fill="#10107a" text-anchor="end" font-weight="normal" stroke="#10107a" stroke-width="0.15" letter-spacing="-0.15" >573</text>
<rect x="341" y="462" width="8" height="8" fill="#000" />
<rect x="342" y="463" width="6" height="6" fill="#ff00ff" />
<text x="351" y="470" font-size="11" fill="#000" text-anchor="start" font-weight="normal" stroke="#000" stroke-width="0.15" letter-spacing="-0.15" >Jitter</text>
<rect x="331.5" y="466.5" width="146" height="41" fill="none" stroke="#ffffff" stroke-width="1" transform="translate(1,1)"/>
<rect x="331.5" y="466.5" width="146" height="41" fill="none" stroke="#d0d0bf" stroke-width="1"/>
<text x="340" y="486" font-size="11" fill="#000" text-anchor="start" font-weight="normal" stroke="#000" stroke-width="0.15" letter-spacing="-0.15" >Durchschnitt</text>
<text x="468" y="486" font-size="11" fill="#10107a" text-anchor="end" font-weight="normal" stroke="#10107a" stroke-width="0.15" letter-spacing="-0.15" >9.45 %</text>
<text x="340" y="501" font-size="11" fill="#000" text-anchor="start" font-weight="normal" stroke="#000" stroke-width="0.15" letter-spacing="-0.15" >Maximum:</text>
<text x="468" y="501" font-size="11" fill="#10107a" text-anchor="end" font-weight="normal" stroke="#10107a" stroke-width="0.15" letter-spacing="-0.15" >11.5 %</text>
<text x="340" y="519" font-size="11" fill="#000" text-anchor="start" font-weight="normal" stroke="#000" stroke-width="0.15" letter-spacing="-0.15" >PO Ausfälle:</text>
<text x="468" y="519" font-size="11" fill="#10107a" text-anchor="end" font-weight="normal" stroke="#10107a" stroke-width="0.15" letter-spacing="-0.15" >0</text>
</svg></body></html>
